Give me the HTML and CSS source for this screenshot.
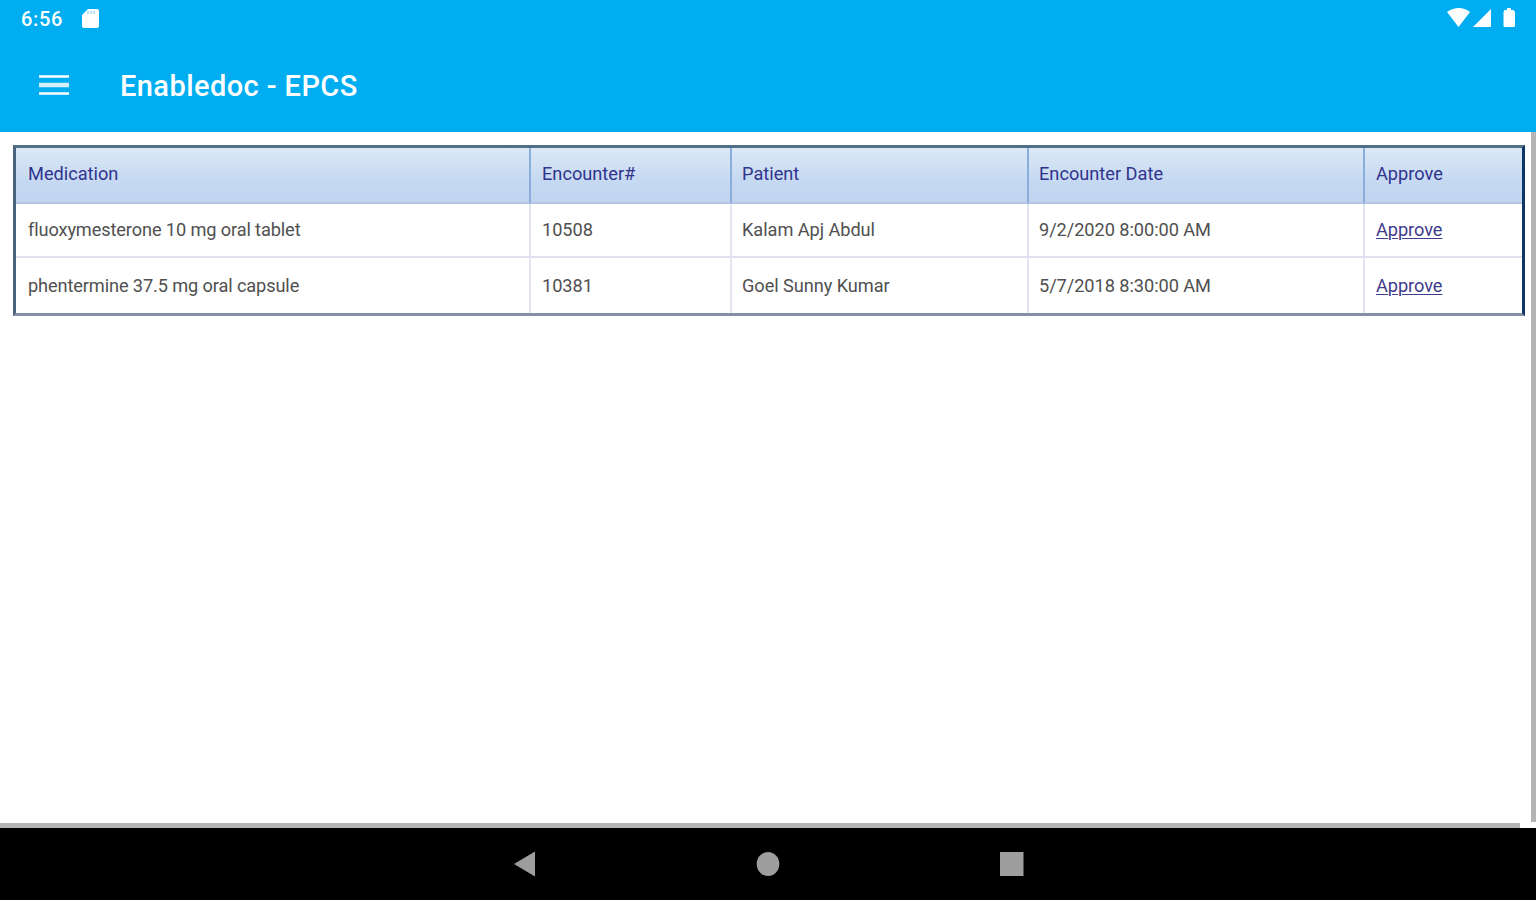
FILE: index.html
```html
<!DOCTYPE html>
<html lang="en">
<head>
<meta charset="utf-8">
<title>Enabledoc - EPCS</title>
<link rel="stylesheet" href="styles.css">
</head>
<body>
<header class="top">
  <div class="status">
    <span class="clock">6:56</span>
    <svg class="sd" width="17" height="19" viewBox="0 0 17 19"><path d="M6 0H15Q17 0 17 2V17Q17 19 15 19H2Q0 19 0 17V6Z" fill="#fff"/><path d="M6 2v3M9 2v3M12 2v3" stroke="#8bd8f8" stroke-width="1.3"/></svg>
    <svg class="signals" width="70" height="22" viewBox="0 0 70 22" fill="#fff"><path d="M0 4Q12 -4 23 4L11.500 19Z"/><path d="M44 1V19H26Z"/><path d="M57.500 2H60V0h4v2h2.500L68 4V18q0 1-1 1H57.500q-1 0-1-1V4Z"/></svg>
  </div>
  <div class="appbar">
    <svg class="menu" width="30" height="20" viewBox="0 0 30 20"><path d="M0 1.500H30M0 18.500H30" stroke="#fff" stroke-width="2.400"/><path d="M0 10H30" stroke="#d3effc" stroke-width="4.500"/></svg>
    <h1 class="title">Enabledoc - EPCS</h1>
  </div>
</header>
<main class="content">
  <div class="page">
    <table class="grid">
      <colgroup><col class="c1"><col class="c2"><col class="c3"><col class="c4"><col class="c5"></colgroup>
      <thead><tr><th>Medication</th><th>Encounter#</th><th>Patient</th><th>Encounter Date</th><th>Approve</th></tr></thead>
      <tbody>
        <tr><td>fluoxymesterone 10 mg oral tablet</td><td>10508</td><td>Kalam Apj Abdul</td><td>9/2/2020 8:00:00 AM</td><td><a>Approve</a></td></tr>
        <tr><td>phentermine 37.5 mg oral capsule</td><td>10381</td><td>Goel Sunny Kumar</td><td>5/7/2018 8:30:00 AM</td><td><a>Approve</a></td></tr>
      </tbody>
    </table>
  </div>
  <div class="vscroll"></div>
</main>
<div class="hscroll"><div class="hthumb"></div></div>
<nav class="nav">
  <svg width="22" height="26" viewBox="0 0 22 26"><path d="M0 13L21 .5V25.500Z" fill="#9e9e9e"/></svg>
  <svg width="24" height="26" viewBox="0 0 24 26"><ellipse cx="12" cy="13" rx="11.300" ry="12" fill="#9e9e9e"/></svg>
  <svg width="24" height="26" viewBox="0 0 24 26"><path d="M0 1H23.500V25H0Z" fill="#9e9e9e"/></svg>
</nav>
</body>
</html>
```
FILE: styles.css
```css
* { box-sizing: border-box; }
body { margin: 0; width: 1536px; height: 900px; overflow: hidden; display: flex; flex-direction: column; background: #fff; font-family: Roboto, sans-serif; }
.top { height: 132px; background: #00adf0; color: #fff; }
.status { height: 40px; padding: 8px 19px 0 21px; display: flex; align-items: flex-start; }
.clock { width: 61px; font-size: 20px; line-height: 23px; font-weight: 500; letter-spacing: .7px; }
.sd { margin-top: 1px; }
.signals { margin-left: auto; }
.appbar { height: 92px; padding: 0 40px 0 39px; display: flex; align-items: center; }
.menu { margin-bottom: 2px; }
.title { margin: 0 0 0 51px; font-size: 29px; line-height: 34px; font-weight: 500; letter-spacing: .42px; white-space: nowrap; }
.content { flex: 1; min-height: 0; display: flex; }
.page { flex: 1; padding: 13px 6px 0 13px; }
.vscroll { width: 5px; height: 690px; background: #b4b4b4; }
.grid { width: 1512px; height: 171px; table-layout: fixed; border-collapse: separate; border-spacing: 0; border: 3px solid; border-color: #507088 #0d3566 #848ea4 #48647f; font-size: 18.2px; }
.c1 { width: 515px; }
.c2 { width: 201px; }
.c3 { width: 297px; }
.c4 { width: 336px; }
th, td { padding: 0 10px; text-align: left; font-weight: 400; white-space: nowrap; line-height: 22px; }
th { height: 56px; padding-bottom: 2px; color: #30348c; border-right: 2px solid #8aaedb; border-bottom: 2px solid #b7c3e3; background: linear-gradient(#dce8f5, #c4d8f2 65%, #c1d5f0); }
td { color: #505050; border-right: 2px solid #e4e4f1; letter-spacing: -.06px; }
tbody tr:first-child td { height: 54px; border-bottom: 2px solid #e0e0ee; }
tbody tr:last-child td { height: 55px; }
th:first-child, td:first-child { padding-left: 12px; }
td:first-child { letter-spacing: -.12px; }
th:nth-child(2), td:nth-child(2) { padding-left: 11px; }
th:last-child, td:last-child { border-right: 0; padding-left: 11px; }
a { color: #403b8c; text-decoration: underline; text-decoration-thickness: 1px; text-underline-offset: 2px; }
.hscroll { height: 5px; }
.hthumb { width: 1520px; height: 5px; background: #b4b4b4; }
.nav { height: 72px; background: #000; display: flex; justify-content: space-between; align-items: center; padding: 0 512px 0 514px; }
```
